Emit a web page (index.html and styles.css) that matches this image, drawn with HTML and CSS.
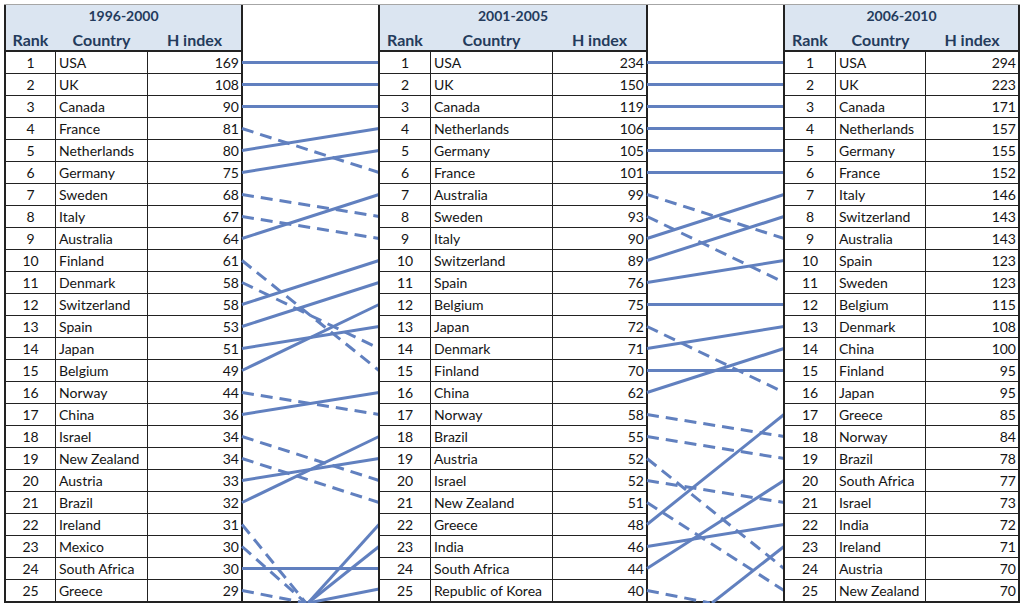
FILE: index.html
```html
<!DOCTYPE html>
<html>
<head>
<meta charset="utf-8">
<link rel="stylesheet" href="styles.css">
</head>
<body>
<div class="page">
<div class="frame">

<div class="tbl t1">
  <div class="thead">
    <div class="period">1996-2000</div>
    <div class="cols"><span>Rank</span><span>Country</span><span>H index</span></div>
  </div>
  <div class="tbody">
    <span class="r">1</span><span class="c">USA</span><span class="h">169</span>
    <span class="r">2</span><span class="c">UK</span><span class="h">108</span>
    <span class="r">3</span><span class="c">Canada</span><span class="h">90</span>
    <span class="r">4</span><span class="c">France</span><span class="h">81</span>
    <span class="r">5</span><span class="c">Netherlands</span><span class="h">80</span>
    <span class="r">6</span><span class="c">Germany</span><span class="h">75</span>
    <span class="r">7</span><span class="c">Sweden</span><span class="h">68</span>
    <span class="r">8</span><span class="c">Italy</span><span class="h">67</span>
    <span class="r">9</span><span class="c">Australia</span><span class="h">64</span>
    <span class="r">10</span><span class="c">Finland</span><span class="h">61</span>
    <span class="r">11</span><span class="c">Denmark</span><span class="h">58</span>
    <span class="r">12</span><span class="c">Switzerland</span><span class="h">58</span>
    <span class="r">13</span><span class="c">Spain</span><span class="h">53</span>
    <span class="r">14</span><span class="c">Japan</span><span class="h">51</span>
    <span class="r">15</span><span class="c">Belgium</span><span class="h">49</span>
    <span class="r">16</span><span class="c">Norway</span><span class="h">44</span>
    <span class="r">17</span><span class="c">China</span><span class="h">36</span>
    <span class="r">18</span><span class="c">Israel</span><span class="h">34</span>
    <span class="r">19</span><span class="c">New Zealand</span><span class="h">34</span>
    <span class="r">20</span><span class="c">Austria</span><span class="h">33</span>
    <span class="r">21</span><span class="c">Brazil</span><span class="h">32</span>
    <span class="r">22</span><span class="c">Ireland</span><span class="h">31</span>
    <span class="r">23</span><span class="c">Mexico</span><span class="h">30</span>
    <span class="r">24</span><span class="c">South Africa</span><span class="h">30</span>
    <span class="r">25</span><span class="c">Greece</span><span class="h">29</span>
  </div>
</div>

<div class="gap">
  <svg width="135" height="596" viewBox="0 0 135 596">
    <g class="s">
      <line x1="-1" y1="57.5" x2="136" y2="57.5"/>
      <line x1="-1" y1="79.5" x2="136" y2="79.5"/>
      <line x1="-1" y1="101.5" x2="136" y2="101.5"/>
      <line x1="-1" y1="145.5" x2="136" y2="123.5"/>
      <line x1="-1" y1="167.5" x2="136" y2="145.5"/>
      <line x1="-1" y1="233.5" x2="136" y2="189.5"/>
      <line x1="-1" y1="299.5" x2="136" y2="255.5"/>
      <line x1="-1" y1="321.5" x2="136" y2="277.5"/>
      <line x1="-1" y1="343.5" x2="136" y2="321.5"/>
      <line x1="-1" y1="365.5" x2="136" y2="299.5"/>
      <line x1="-1" y1="409.5" x2="136" y2="387.5"/>
      <line x1="-1" y1="475.5" x2="136" y2="453.5"/>
      <line x1="-1" y1="497.5" x2="136" y2="431.5"/>
      <line x1="-1" y1="563.5" x2="136" y2="563.5"/>
      <line x1="65" y1="598" x2="136" y2="519.5"/>
      <line x1="65" y1="598" x2="136" y2="541.5"/>
      <line x1="65" y1="598" x2="136" y2="584"/>
    </g>
    <g class="d">
      <line x1="-1" y1="123.5" x2="136" y2="167.5"/>
      <line x1="-1" y1="189.5" x2="136" y2="211.5"/>
      <line x1="-1" y1="211.5" x2="136" y2="233.5"/>
      <line x1="-1" y1="255.5" x2="136" y2="365.5"/>
      <line x1="-1" y1="277.5" x2="136" y2="343.5"/>
      <line x1="-1" y1="387.5" x2="136" y2="409.5"/>
      <line x1="-1" y1="431.5" x2="136" y2="475.5"/>
      <line x1="-1" y1="453.5" x2="136" y2="497.5"/>
      <line x1="-1" y1="519.5" x2="63" y2="598"/>
      <line x1="-1" y1="541.5" x2="63" y2="598"/>
      <line x1="-1" y1="585.5" x2="63" y2="598"/>
    </g>
  </svg>
</div>

<div class="tbl t2">
  <div class="thead">
    <div class="period">2001-2005</div>
    <div class="cols"><span>Rank</span><span>Country</span><span>H index</span></div>
  </div>
  <div class="tbody">
    <span class="r">1</span><span class="c">USA</span><span class="h">234</span>
    <span class="r">2</span><span class="c">UK</span><span class="h">150</span>
    <span class="r">3</span><span class="c">Canada</span><span class="h">119</span>
    <span class="r">4</span><span class="c">Netherlands</span><span class="h">106</span>
    <span class="r">5</span><span class="c">Germany</span><span class="h">105</span>
    <span class="r">6</span><span class="c">France</span><span class="h">101</span>
    <span class="r">7</span><span class="c">Australia</span><span class="h">99</span>
    <span class="r">8</span><span class="c">Sweden</span><span class="h">93</span>
    <span class="r">9</span><span class="c">Italy</span><span class="h">90</span>
    <span class="r">10</span><span class="c">Switzerland</span><span class="h">89</span>
    <span class="r">11</span><span class="c">Spain</span><span class="h">76</span>
    <span class="r">12</span><span class="c">Belgium</span><span class="h">75</span>
    <span class="r">13</span><span class="c">Japan</span><span class="h">72</span>
    <span class="r">14</span><span class="c">Denmark</span><span class="h">71</span>
    <span class="r">15</span><span class="c">Finland</span><span class="h">70</span>
    <span class="r">16</span><span class="c">China</span><span class="h">62</span>
    <span class="r">17</span><span class="c">Norway</span><span class="h">58</span>
    <span class="r">18</span><span class="c">Brazil</span><span class="h">55</span>
    <span class="r">19</span><span class="c">Austria</span><span class="h">52</span>
    <span class="r">20</span><span class="c">Israel</span><span class="h">52</span>
    <span class="r">21</span><span class="c">New Zealand</span><span class="h">51</span>
    <span class="r">22</span><span class="c">Greece</span><span class="h">48</span>
    <span class="r">23</span><span class="c">India</span><span class="h">46</span>
    <span class="r">24</span><span class="c">South Africa</span><span class="h">44</span>
    <span class="r">25</span><span class="c">Republic of Korea</span><span class="h">40</span>
  </div>
</div>

<div class="gap">
  <svg width="135" height="596" viewBox="0 0 135 596">
    <g class="s">
      <line x1="-1" y1="57.5" x2="136" y2="57.5"/>
      <line x1="-1" y1="79.5" x2="136" y2="79.5"/>
      <line x1="-1" y1="101.5" x2="136" y2="101.5"/>
      <line x1="-1" y1="123.5" x2="136" y2="123.5"/>
      <line x1="-1" y1="145.5" x2="136" y2="145.5"/>
      <line x1="-1" y1="167.5" x2="136" y2="167.5"/>
      <line x1="-1" y1="233.5" x2="136" y2="189.5"/>
      <line x1="-1" y1="255.5" x2="136" y2="211.5"/>
      <line x1="-1" y1="277.5" x2="136" y2="255.5"/>
      <line x1="-1" y1="299.5" x2="136" y2="299.5"/>
      <line x1="-1" y1="343.5" x2="136" y2="321.5"/>
      <line x1="-1" y1="365.5" x2="136" y2="365.5"/>
      <line x1="-1" y1="387.5" x2="136" y2="343.5"/>
      <line x1="-1" y1="519.5" x2="136" y2="409.5"/>
      <line x1="-1" y1="541.5" x2="136" y2="519.5"/>
      <line x1="-1" y1="563.5" x2="136" y2="475.5"/>
      <line x1="64" y1="598" x2="136" y2="541.5"/>
    </g>
    <g class="d">
      <line x1="-1" y1="189.5" x2="136" y2="233.5"/>
      <line x1="-1" y1="211.5" x2="136" y2="277.5"/>
      <line x1="-1" y1="321.5" x2="136" y2="387.5"/>
      <line x1="-1" y1="409.5" x2="136" y2="431.5"/>
      <line x1="-1" y1="431.5" x2="136" y2="453.5"/>
      <line x1="-1" y1="453.5" x2="136" y2="563.5"/>
      <line x1="-1" y1="475.5" x2="136" y2="497.5"/>
      <line x1="-1" y1="497.5" x2="136" y2="585.5"/>
      <line x1="-1" y1="585.5" x2="62" y2="598"/>
    </g>
  </svg>
</div>

<div class="tbl t3">
  <div class="thead">
    <div class="period">2006-2010</div>
    <div class="cols"><span>Rank</span><span>Country</span><span>H index</span></div>
  </div>
  <div class="tbody">
    <span class="r">1</span><span class="c">USA</span><span class="h">294</span>
    <span class="r">2</span><span class="c">UK</span><span class="h">223</span>
    <span class="r">3</span><span class="c">Canada</span><span class="h">171</span>
    <span class="r">4</span><span class="c">Netherlands</span><span class="h">157</span>
    <span class="r">5</span><span class="c">Germany</span><span class="h">155</span>
    <span class="r">6</span><span class="c">France</span><span class="h">152</span>
    <span class="r">7</span><span class="c">Italy</span><span class="h">146</span>
    <span class="r">8</span><span class="c">Switzerland</span><span class="h">143</span>
    <span class="r">9</span><span class="c">Australia</span><span class="h">143</span>
    <span class="r">10</span><span class="c">Spain</span><span class="h">123</span>
    <span class="r">11</span><span class="c">Sweden</span><span class="h">123</span>
    <span class="r">12</span><span class="c">Belgium</span><span class="h">115</span>
    <span class="r">13</span><span class="c">Denmark</span><span class="h">108</span>
    <span class="r">14</span><span class="c">China</span><span class="h">100</span>
    <span class="r">15</span><span class="c">Finland</span><span class="h">95</span>
    <span class="r">16</span><span class="c">Japan</span><span class="h">95</span>
    <span class="r">17</span><span class="c">Greece</span><span class="h">85</span>
    <span class="r">18</span><span class="c">Norway</span><span class="h">84</span>
    <span class="r">19</span><span class="c">Brazil</span><span class="h">78</span>
    <span class="r">20</span><span class="c">South Africa</span><span class="h">77</span>
    <span class="r">21</span><span class="c">Israel</span><span class="h">73</span>
    <span class="r">22</span><span class="c">India</span><span class="h">72</span>
    <span class="r">23</span><span class="c">Ireland</span><span class="h">71</span>
    <span class="r">24</span><span class="c">Austria</span><span class="h">70</span>
    <span class="r">25</span><span class="c">New Zealand</span><span class="h">70</span>
  </div>
</div>

</div>
</div>
</body>
</html>
```

FILE: styles.css
```css
html, body {
  margin: 0;
  padding: 0;
  background: #ffffff;
}

body {
  font-family: Lato, "Liberation Sans", sans-serif;
  color: #141414;
}

.page {
  padding: 4px 4px 0 4px;
}

.frame {
  display: flex;
  width: 1016px;
  border-top: 1px solid #a6a6a6;
  border-bottom: 2px solid #222222;
}

.tbl {
  display: flex;
  flex-direction: column;
  border-left: 2px solid #222222;
  border-right: 2px solid #222222;
}

.t1 { --cols: 49px 91px 93px; }
.t2 { --cols: 50px 121px 93px; }
.t3 { --cols: 50px 89px 92px; }

.thead {
  height: 45px;
  background: #dbe5f1;
  border-bottom: 2px solid #222222;
  color: #243b5c;
  font-weight: 700;
}

.period {
  padding-top: 2px;
  font-size: 14px;
  line-height: 18px;
  text-align: center;
}

.cols {
  display: grid;
  grid-template-columns: var(--cols);
  column-gap: 1px;
  margin-top: 5px;
  font-size: 16px;
  line-height: 19px;
  text-align: center;
}

.tbody {
  display: grid;
  grid-template-columns: var(--cols);
  grid-auto-rows: 21px;
  gap: 1px;
  background: #222222;
}

.tbody span {
  background: #ffffff;
  font-size: 14px;
  padding-top: 1px;
  line-height: 20px;
  white-space: nowrap;
  overflow: hidden;
}

.r { text-align: center; }
.c { padding-left: 3px; }
.h { text-align: right; padding-right: 2px; }

.gap {
  width: 135px;
  flex: none;
}

.gap svg {
  display: block;
  overflow: visible;
}

.gap line {
  stroke: #6180bf;
  stroke-width: 3;
  fill: none;
}

.gap .d line {
  stroke-dasharray: 12 7;
}
```
